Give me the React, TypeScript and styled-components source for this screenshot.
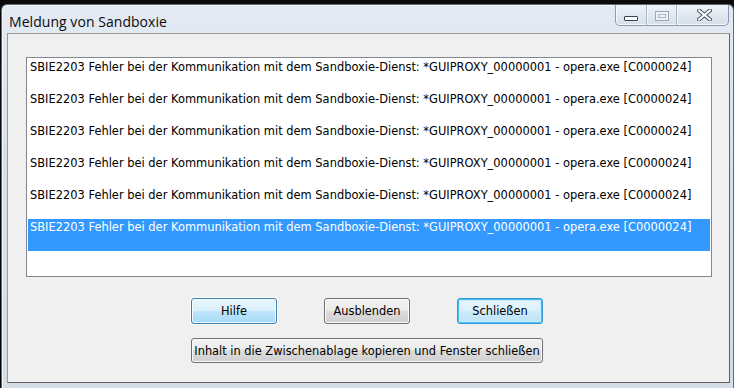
import React from "react";
import styled, { createGlobalStyle, css } from "styled-components";

const GlobalStyle = createGlobalStyle`
  html, body { margin: 0; padding: 0; background: #000; }
  body { width: 734px; height: 388px; overflow: hidden; }
  #root { width: 734px; height: 388px; }
`;

const Desktop = styled.div`
  box-sizing: border-box;
  width: 734px;
  height: 388px;
  padding: 4px 0 0 1px;
  background: linear-gradient(#0b0b0b, #000);
`;

const Window = styled.div`
  box-sizing: border-box;
  width: 733px;
  height: 384px;
  border: 1px solid #5f6873;
  border-bottom: none;
  border-radius: 6px 6px 0 0;
  background: linear-gradient(180deg, #e3eaf3 0%, #d7e1ec 40%, #d4dee9 100%);
  box-shadow: inset 1px 1px 0 #f4f7fb;
  display: flex;
  flex-direction: column;
`;

const TitleBar = styled.div`
  height: 28px;
  display: flex;
  align-items: flex-start;
  flex-shrink: 0;
`;

const Title = styled.div`
  font-family: "Open Sans", "Noto Sans", sans-serif;
  font-size: 14px;
  line-height: 18px;
  color: #0b0b0b;
  padding: 8px 0 0 7px;
  letter-spacing: 0.05px;
`;

const CaptionGroup = styled.div`
  margin-left: auto;
  margin-right: 4px;
  display: flex;
  height: 20px;
  border: 1px solid #8d9bad;
  border-top: none;
  border-radius: 0 0 5px 5px;
  background: linear-gradient(180deg, #eef3f8 0%, #e1e8f1 50%, #d6dfea 100%);
  box-shadow: inset 0 -1px 0 #f7f9fc, inset 1px 0 0 #f5f8fb;
  overflow: hidden;
`;

const CaptionButton = styled.div<{ $w: number; $divider?: boolean }>`
  width: ${(p) => p.$w}px;
  height: 20px;
  display: flex;
  align-items: center;
  justify-content: center;
  ${(p) =>
    p.$divider &&
    css`
      border-right: 1px solid #a8b5c5;
      box-shadow: 1px 0 0 #f3f6fa;
    `}
`;

const Client = styled.div`
  flex: 1;
  margin: 0 3px 5px 5px;
  border: 1px solid #9a9a9a;
  border-right-color: #5f5f5f;
  border-bottom-color: #5f5f5f;
  background: #f0f0f0;
  display: flex;
  flex-direction: column;
  padding: 23px 0 0 18px;
`;

const ListBox = styled.div`
  box-sizing: border-box;
  width: 686px;
  height: 220px;
  border: 1px solid #828790;
  background: #fff;
  padding: 1px 1px 0 1px;
  display: flex;
  flex-direction: column;
  overflow: hidden;
`;

const Row = styled.div<{ $selected?: boolean }>`
  height: 32px;
  flex-shrink: 0;
  box-sizing: border-box;
  padding: 2px 0 0 2px;
  font-family: "DejaVu Sans", "Liberation Sans", sans-serif;
  font-size: 11.45px;
  line-height: 13px;
  white-space: nowrap;
  color: ${(p) => (p.$selected ? "#ffffff" : "#000000")};
  background: ${(p) => (p.$selected ? "#3399ff" : "transparent")};
`;

const ButtonArea = styled.div`
  margin: 21px 0 0 165px;
  width: 352px;
  display: flex;
  flex-direction: column;
  gap: 14px;
`;

const ButtonRow = styled.div`
  display: flex;
  justify-content: space-between;
`;

type Variant = "normal" | "focus" | "default";

const Button = styled.div<{ $variant?: Variant; $w?: number; $h?: number }>`
  box-sizing: border-box;
  width: ${(p) => p.$w ?? 86}px;
  height: ${(p) => p.$h ?? 26}px;
  border-radius: 3px;
  display: flex;
  align-items: center;
  justify-content: center;
  font-family: "DejaVu Sans", "Liberation Sans", sans-serif;
  font-size: 11.4px;
  color: #000;
  white-space: nowrap;
  border: 1px solid #707070;
  background: linear-gradient(180deg, #f2f2f2 0%, #ebebeb 49%, #dddddd 50%, #cfcfcf 100%);
  box-shadow: inset 0 0 0 1px #fbfbfb;
  ${(p) =>
    p.$variant === "focus" &&
    css`
      border-color: #3c7fb1;
      background: linear-gradient(180deg, #eaf6fd 0%, #d9f0fc 49%, #bee6fd 50%, #a7d9f5 100%);
      box-shadow: inset 0 0 0 1px #f4fbfe, 0 0 0 1px #fdfdfd;
    `}
  ${(p) =>
    p.$variant === "default" &&
    css`
      border-color: #3399d6;
      background: linear-gradient(180deg, #e7f5fd 0%, #dcf1fc 49%, #cdebfb 50%, #bfe4f8 100%);
      box-shadow: inset 0 0 0 1px #4ec1f0, inset 0 0 0 2px #c5ecfc;
    `}
`;

const MESSAGE =
  "SBIE2203 Fehler bei der Kommunikation mit dem Sandboxie-Dienst: *GUIPROXY_00000001 - opera.exe [C0000024]";

const MinIcon = () => (
  <svg width="14" height="5" viewBox="0 0 14 5" style={{ marginTop: 7 }}>
    <rect x="0.5" y="0.5" width="13" height="4" fill="#fbfcfd" stroke="#3b4452" strokeWidth="1" rx="0.5" />
  </svg>
);

const MaxIcon = () => (
  <svg width="14" height="10" viewBox="0 0 14 10" style={{ marginTop: 1 }}>
    <rect x="0.5" y="0.5" width="13" height="9" fill="#eef2f7" stroke="#9ea8b6" strokeWidth="1" />
    <rect x="3.5" y="3.5" width="7" height="3" fill="none" stroke="#aeb8c5" strokeWidth="1" />
  </svg>
);

const CloseIcon = () => (
  <svg width="15" height="12" viewBox="0 0 15 12" style={{ marginLeft: 3, marginTop: -1 }}>
    <path d="M2 1.5 L13 10.5 M13 1.5 L2 10.5" stroke="#47505e" strokeWidth="4" strokeLinecap="square" />
    <path d="M2 1.5 L13 10.5 M13 1.5 L2 10.5" stroke="#ffffff" strokeWidth="2" strokeLinecap="square" />
  </svg>
);

export default function App() {
  const rows = [0, 1, 2, 3, 4, 5];
  return (
    <>
      <GlobalStyle />
      <Desktop>
        <Window>
          <TitleBar>
            <Title>Meldung von Sandboxie</Title>
            <CaptionGroup>
              <CaptionButton $w={30} $divider>
                <MinIcon />
              </CaptionButton>
              <CaptionButton $w={29} $divider>
                <MaxIcon />
              </CaptionButton>
              <CaptionButton $w={51}>
                <CloseIcon />
              </CaptionButton>
            </CaptionGroup>
          </TitleBar>
          <Client>
            <ListBox>
              {rows.map((i) => (
                <Row key={i} $selected={i === 5}>
                  {MESSAGE}
                </Row>
              ))}
            </ListBox>
            <ButtonArea>
              <ButtonRow>
                <Button $variant="focus">Hilfe</Button>
                <Button>Ausblenden</Button>
                <Button $variant="default">Schließen</Button>
              </ButtonRow>
              <Button $w={352} $h={25}>
                Inhalt in die Zwischenablage kopieren und Fenster schließen
              </Button>
            </ButtonArea>
          </Client>
        </Window>
      </Desktop>
    </>
  );
}
